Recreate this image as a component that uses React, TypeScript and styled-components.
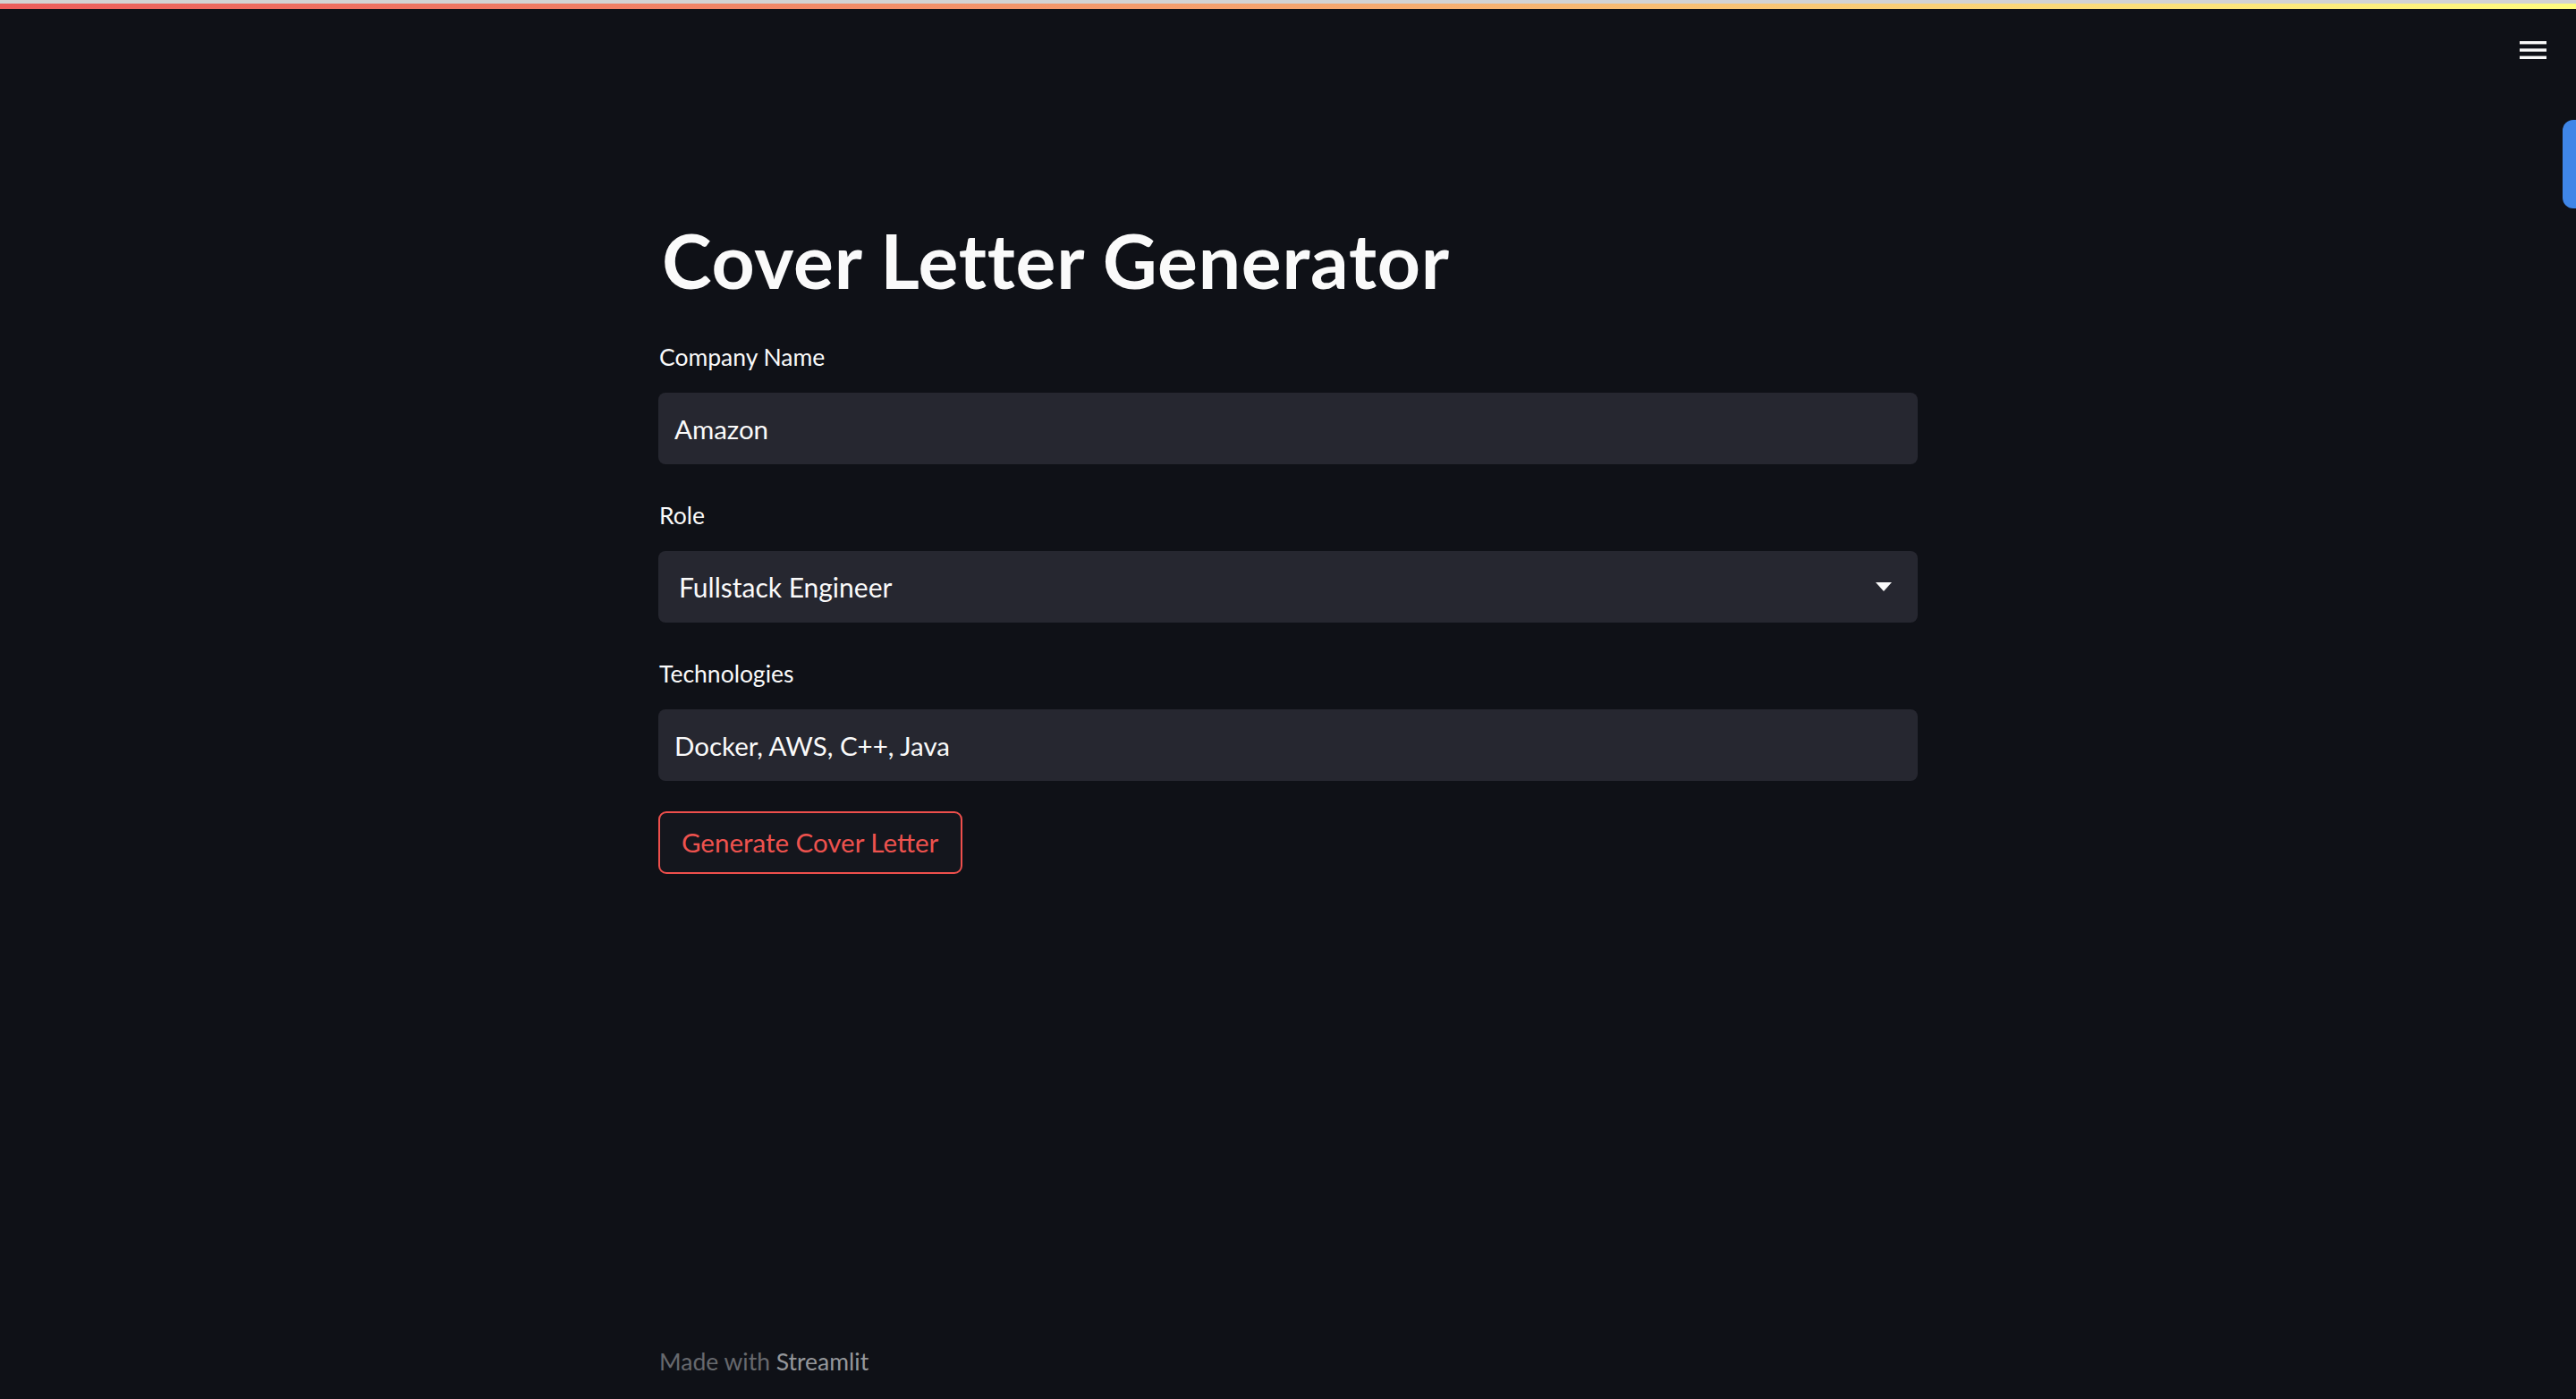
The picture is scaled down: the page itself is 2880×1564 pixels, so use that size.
import React from "react";
import styled, { createGlobalStyle } from "styled-components";

const GlobalStyle = createGlobalStyle`
  html, body {
    margin: 0;
    padding: 0;
    background: #0f1117;
  }
  body {
    font-family: Lato, "Open Sans", sans-serif;
    color: #fafafa;
  }
  * { box-sizing: border-box; }
`;

const Page = styled.div`
  min-height: 100vh;
  display: flex;
  flex-direction: column;
  background: #0f1117;
  position: relative;
  overflow: hidden;
`;

const Decoration = styled.div`
  height: 10px;
  border-top: 4px solid #d3d3d3;
  background: linear-gradient(90deg, #ec5d5b 0%, #f5a46e 50%, #fffd80 100%);
`;

const Header = styled.header`
  height: 92px;
  display: flex;
  align-items: center;
  justify-content: flex-end;
  padding-right: 33px;
`;

const MenuButton = styled.button`
  background: none;
  border: none;
  padding: 0;
  display: flex;
  cursor: pointer;
`;

const SideTab = styled.div`
  position: absolute;
  right: 0;
  top: 134px;
  width: 15px;
  height: 99px;
  background: #3f86e8;
  border-radius: 12px 0 0 12px;
`;

const Main = styled.main`
  width: 1408px;
  margin: 0 auto;
  padding-top: 139px;
  display: flex;
  flex-direction: column;
`;

const Title = styled.h1`
  margin: 0 0 40px 4px;
  font-size: 84px;
  line-height: 100px;
  font-weight: 700;
  letter-spacing: 0.8px;
  color: #fafafa;
`;

const Field = styled.div<{ $last?: boolean }>`
  display: flex;
  flex-direction: column;
  gap: 22px;
  margin-bottom: ${(p) => (p.$last ? "34px" : "39px")};
`;

const Label = styled.label`
  font-size: 26.5px;
  line-height: 36px;
  color: #fafafa;
  margin-left: 1px;
`;

const TextInput = styled.input`
  height: 80px;
  width: 100%;
  border: none;
  outline: none;
  border-radius: 8px;
  background: #262730;
  color: #fafafa;
  font-family: Lato, "Open Sans", sans-serif;
  font-size: 29.5px;
  line-height: 40px;
  padding: 0 18px;
`;

const SelectBox = styled.div`
  height: 80px;
  border-radius: 8px;
  background: #262730;
  display: flex;
  align-items: center;
  justify-content: space-between;
  padding: 0 29px 0 23px;
`;

const SelectValue = styled.span`
  font-size: 30px;
  line-height: 40px;
  color: #fafafa;
`;

const Button = styled.button`
  align-self: flex-start;
  height: 70px;
  padding: 0 25px 0 24px;
  border: 2px solid #ee4f4c;
  border-radius: 9px;
  background: #14161d;
  color: #ee524e;
  font-family: Lato, "Open Sans", sans-serif;
  font-size: 29.5px;
  line-height: 40px;
  cursor: pointer;
`;

const Footer = styled.footer`
  width: 1408px;
  margin: auto auto 0;
  padding-bottom: 24px;
  font-size: 26.5px;
  line-height: 36px;
  color: #67696e;
  padding-left: 1px;
`;

const FooterLink = styled.span`
  color: #95979b;
`;

const Hamburger = () => (
  <svg width="30" height="20" viewBox="0 0 30 20">
    <rect x="0" y="0" width="30" height="3.4" fill="#fafafa" />
    <rect x="0" y="8.3" width="30" height="3.4" fill="#fafafa" />
    <rect x="0" y="16.6" width="30" height="3.4" fill="#fafafa" />
  </svg>
);

const Caret = () => (
  <svg width="18" height="10" viewBox="0 0 18 10">
    <polygon points="0,0 18,0 9,10" fill="#fafafa" />
  </svg>
);

export default function App() {
  return (
    <>
      <GlobalStyle />
      <Page>
        <Decoration />
        <Header>
          <MenuButton aria-label="Menu">
            <Hamburger />
          </MenuButton>
        </Header>
        <SideTab />
        <Main>
          <Title>Cover Letter Generator</Title>
          <Field>
            <Label>Company Name</Label>
            <TextInput defaultValue="Amazon" />
          </Field>
          <Field>
            <Label>Role</Label>
            <SelectBox>
              <SelectValue>Fullstack Engineer</SelectValue>
              <Caret />
            </SelectBox>
          </Field>
          <Field $last>
            <Label>Technologies</Label>
            <TextInput defaultValue="Docker, AWS, C++, Java" />
          </Field>
          <Button>Generate Cover Letter</Button>
        </Main>
        <Footer>
          Made with <FooterLink>Streamlit</FooterLink>
        </Footer>
      </Page>
    </>
  );
}
